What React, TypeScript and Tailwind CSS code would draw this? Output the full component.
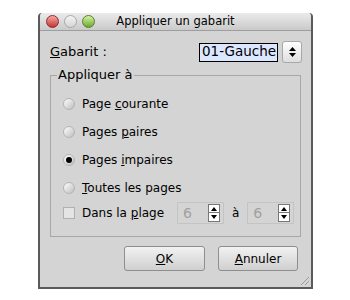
import React from 'react';

const font = { fontFamily: '"DejaVu Sans", "Liberation Sans", sans-serif' };

function Radio({ checked }: { checked?: boolean }) {
  return (
    <span className="relative inline-block w-[12px] h-[12px] rounded-full border border-[#b4b4b4] bg-gradient-to-br from-[#ffffff] to-[#bdbdbd]">
      {checked && <span className="absolute left-[2px] top-[2px] w-[6px] h-[6px] rounded-full bg-black" />}
    </span>
  );
}

function Arrows() {
  return (
    <div className="flex flex-col">
      <span className="w-[12px] h-[9px] border border-[#777] bg-white flex items-center justify-center">
        <svg width="6" height="4" viewBox="0 0 6 4"><path d="M0 4 L3 0 L6 4 Z" fill="#000" /></svg>
      </span>
      <span className="w-[12px] h-[9px] border border-[#777] border-t-0 bg-white flex items-center justify-center">
        <svg width="6" height="4" viewBox="0 0 6 4"><path d="M0 0 L6 0 L3 4 Z" fill="#000" /></svg>
      </span>
    </div>
  );
}

function Spin({ value, w }: { value: string; w: string }) {
  return (
    <div className={`flex items-center h-[22px] ${w} border border-[#c4c4c4] bg-[#d4d4d4] pr-[3px]`}>
      <span className="flex-1 pl-[5px] text-[#a0a0a0] text-[14px] leading-none">{value}</span>
      <Arrows />
    </div>
  );
}

export default function App() {
  return (
    <div className="w-[350px] h-[300px] bg-white pt-[13px] pl-[38px]" style={font}>
      <div className="w-[275px] h-[276px] flex flex-col border-2 border-t-0 border-[#5a5a5a] rounded-t-[4px] bg-[#d4d4d4] text-[12px] text-black">
        {/* title bar */}
        <div className="relative h-[18px] flex items-center justify-center bg-gradient-to-b from-[#ebebeb] to-[#cacaca] border-b border-[#9e9e9e] rounded-t-[4px]">
          <div className="absolute left-[6px] top-[2px] flex gap-[5px]">
            <span className="w-[13px] h-[13px] rounded-full bg-gradient-to-b from-[#f5a5a5] to-[#c4302f] border border-[#8a2c2c]" />
            <span className="w-[13px] h-[13px] rounded-full bg-gradient-to-b from-[#f4f4f4] to-[#d6d6d6] border border-[#a8a8a8]" />
            <span className="w-[13px] h-[13px] rounded-full bg-gradient-to-b from-[#d6f2a2] to-[#6da92e] border border-[#557f2c]" />
          </div>
          <span className="text-[11.5px] leading-none">Appliquer un gabarit</span>
        </div>

        {/* gabarit row */}
        <div className="flex items-center justify-between pl-[10px] pr-[9px] mt-[10px] h-[22px]">
          <span className="text-[13px]"><span className="underline">G</span>abarit :</span>
          <div className="flex items-center gap-[4px]">
            <span className="h-[19px] w-[79px] pl-[2px] flex items-center bg-[#dbe7ff] border border-black text-[13.5px] leading-none whitespace-nowrap overflow-hidden">01-Gauche</span>
            <span className="w-[20px] h-[22px] rounded-[3px] border border-[#a8a8a8] bg-gradient-to-b from-white to-[#dedede] flex flex-col items-center justify-center gap-[2px]">
              <svg width="7" height="4" viewBox="0 0 7 4"><path d="M0 4 L3.5 0 L7 4 Z" fill="#000" /></svg>
              <svg width="7" height="4" viewBox="0 0 7 4"><path d="M0 0 L7 0 L3.5 4 Z" fill="#000" /></svg>
            </span>
          </div>
        </div>

        {/* group box */}
        <div className="relative mx-[10px] mt-[12px] h-[162px] border border-[#a8a8a8] flex flex-col pl-[12px] pt-[20px]">
          <span className="absolute left-[6px] top-[-8px] bg-[#d4d4d4] px-[1px] leading-none text-[13px]">Appliquer à</span>
          <div className="flex flex-col gap-[12px]">
            <label className="flex items-center gap-[7px] h-[16px]"><Radio /><span>Page <span className="underline">c</span>ourante</span></label>
            <label className="flex items-center gap-[7px] h-[16px]"><Radio /><span>Pages <span className="underline">p</span>aires</span></label>
            <label className="flex items-center gap-[7px] h-[16px]"><Radio checked /><span>Pages <span className="underline">i</span>mpaires</span></label>
            <label className="flex items-center gap-[7px] h-[16px]"><Radio /><span><span className="underline">T</span>outes les pages</span></label>
          </div>
          <div className="flex items-center mt-[6px] h-[22px]">
            <span className="w-[12px] h-[12px] border border-[#b0b0b0] bg-[#e4e4e4]" />
            <span className="ml-[7px] w-[95px] whitespace-nowrap">Dans la <span className="underline">p</span>lage</span>
            <Spin value="6" w="w-[47px]" />
            <span className="mx-[8px]">à</span>
            <Spin value="6" w="w-[47px]" />
          </div>
        </div>

        {/* buttons */}
        <div className="flex justify-end gap-[13px] pr-[13px] mt-[9px]">
          <button className="w-[81px] h-[25px] border border-[#8e8e8e] rounded-[3px] bg-gradient-to-b from-[#f2f2f2] to-[#cfcfcf]"><span className="underline">O</span>K</button>
          <button className="w-[80px] h-[25px] border border-[#8e8e8e] rounded-[3px] bg-gradient-to-b from-[#f2f2f2] to-[#cfcfcf]"><span className="underline">A</span>nnuler</button>
        </div>
        <div className="flex-1 flex items-end justify-end pr-[2px] pb-[2px]">
          <svg width="9" height="9" viewBox="0 0 9 9"><path d="M9 1 L1 9 M9 5 L5 9" stroke="#9a9a9a" strokeWidth="1" /></svg>
        </div>
      </div>
    </div>
  );
}
